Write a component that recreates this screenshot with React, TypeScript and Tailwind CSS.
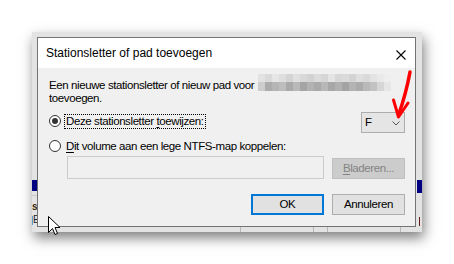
import React from 'react';

const body = "font-['Liberation_Sans',Arial,sans-serif] text-[11.5px] leading-[13px] tracking-[-0.4px] text-black";

// mosaic blur behind the drive name
const topRow = ['#e2e2e2', '#d9d9d9', '#e6e6e6', '#dedede', '#d4d4d4', '#e0e0e0', '#d8d8d8', '#d2d2d2', '#dcdcdc', '#d6d6d6', '#e4e4e4', '#d7d7d7', '#dadada', '#d3d3d3', '#dfdfdf', '#d9d9d9', '#e3e3e3', '#e9e9e9', '#eeeeee'];
const bottomRow = ['#cdcdcd', '#acacac', '#b5b5b5', '#bdbdbd', '#a9a9a9', '#b9b9b9', '#a4a4a4', '#b2b2b2', '#aaaaaa', '#b7b7b7', '#a7a7a7', '#b1b1b1', '#a3a3a3', '#b3b3b3', '#ababab', '#b9b9b9', '#c2c2c2', '#d6d6d6', '#e6e6e6'];

const Radio = ({ checked }: { checked?: boolean }) => (
    <span className="flex h-[12px] w-[12px] shrink-0 items-center justify-center rounded-full border border-[#333333] bg-white">
        {checked && <span className="h-[6px] w-[6px] rounded-full bg-[#333333]" />}
    </span>
);

const Blurred = () => (
    <span className="-mt-[5px] ml-[4px] inline-flex flex-col align-top">
        <span className="flex">
            {topRow.map((c, i) => (
                <span key={i} className="h-[8px] w-[7px]" style={{ backgroundColor: c }} />
            ))}
        </span>
        <span className="flex">
            {bottomRow.map((c, i) => (
                <span key={i} className="h-[9px] w-[7px]" style={{ backgroundColor: c }} />
            ))}
        </span>
    </span>
);

export default function App() {
    return (
        <div className="relative h-[264px] w-[454px] overflow-hidden bg-white">
            <div className="pl-[32px] pt-[32px]">
                {/* window behind the dialog */}
                <div className="relative h-[200px] w-[390px] bg-[#e3e3e3] shadow-[2px_6px_12px_rgba(0,0,0,0.5)]">
                    <div className="absolute left-0 top-[148px] h-[11px] w-[5px] bg-[#000080]" />
                    <div className="absolute right-0 top-[148px] h-[13px] w-[5px] bg-[#000080]" />
                    <div className="absolute left-0 top-[163px] h-px w-[5px] bg-[#c9c9c9]" />
                    <div className="absolute left-0 top-[169px] font-['Liberation_Sans',Arial,sans-serif] text-[10px] font-bold leading-[12px] text-[#3a2a10]">s</div>
                    <div className="absolute left-0 top-[184px] h-[9px] w-px bg-[#5b9bd5]" />
                    <div className="absolute left-[1px] top-[182px] font-['Liberation_Sans',Arial,sans-serif] text-[10px] leading-[12px] text-[#202020]">E</div>
                    <div className="absolute right-[2px] top-[185px] h-[9px] w-px bg-[#6b1a1a]" />
                    <div className="absolute bottom-0 left-[208px] h-[6px] w-px bg-[#b8b8b8]" />
                    <div className="absolute bottom-0 left-[281px] h-[6px] w-px bg-[#b8b8b8]" />
                    <div className="absolute bottom-0 left-[295px] h-[6px] w-px bg-[#b8b8b8]" />
                    <div className="absolute bottom-0 left-[368px] h-[6px] w-px bg-[#b8b8b8]" />

                    {/* dialog */}
                    <div className="absolute left-[5px] top-[5px] flex h-[190px] w-[379px] flex-col border border-[#737373] bg-[#f0f0f0]">
                        <div className="flex h-[30px] items-center justify-between bg-white pl-[8px] pr-[9px]">
                            <span className="font-['Liberation_Sans',Arial,sans-serif] text-[12px] text-black">Stationsletter of pad toevoegen</span>
                            <svg width="10" height="10" viewBox="0 0 10 10" className="mt-[4px]">
                                <path d="M0.5 0.5 L9.5 9.5 M9.5 0.5 L0.5 9.5" stroke="#000" strokeWidth="1.1" />
                            </svg>
                        </div>

                        <div className={`flex flex-col pl-[11px] pr-[10px] pt-[11px] ${body}`}>
                            <p className="whitespace-nowrap">
                                Een nieuwe stationsletter of nieuw pad voor
                                <Blurred />
                                <br />
                                toevoegen.
                            </p>

                            <div className="mt-[7px] flex items-start justify-between">
                                <div className="mt-[2px] flex h-[14px] items-center gap-[3px]">
                                    <Radio checked />
                                    <span className="border border-dotted border-black px-[1px]">
                                        Deze stationsletter <span className="underline underline-offset-2">t</span>oewijzen:
                                    </span>
                                </div>
                                <div className="flex h-[21px] w-[44px] items-center justify-between border border-[#adadad] bg-[#e5e5e5] pl-[3px] pr-[4px]">
                                    <span>F</span>
                                    <svg width="8" height="5" viewBox="0 0 8 5" className="mt-[2px]">
                                        <path d="M0.5 0.5 L4 4 L7.5 0.5" fill="none" stroke="#555" strokeWidth="1" />
                                    </svg>
                                </div>
                            </div>

                            <div className="mt-[6px] flex h-[14px] items-center gap-[4px]">
                                <Radio />
                                <span className="pl-px">
                                    <span className="underline underline-offset-2">D</span>it volume aan een lege NTFS-map koppelen:
                                </span>
                            </div>

                            <div className="ml-[18px] mt-[3px] flex items-start gap-[8px]">
                                <div className="h-[23px] w-[257px] border border-[#cccccc] bg-[#f0f0f0]" />
                                <div className="mt-[2px] flex h-[21px] w-[73px] items-center justify-center border border-[#bfbfbf] bg-[#cccccc] text-[#838383]">
                                    <span>
                                        <span className="underline underline-offset-2">B</span>laderen...
                                    </span>
                                </div>
                            </div>

                            <div className="mt-[15px] flex justify-end gap-[8px]">
                                <button className="flex h-[21px] w-[73px] items-center justify-center border-2 border-[#0078d7] bg-[#e1e1e1]">OK</button>
                                <button className="flex h-[21px] w-[73px] items-center justify-center border border-[#adadad] bg-[#e1e1e1]">Annuleren</button>
                            </div>
                        </div>
                    </div>
                </div>
            </div>

            {/* red annotation arrow */}
            <svg className="absolute left-[386px] top-[66px]" width="30" height="64" viewBox="386 66 30 64">
                <path d="M410 72 Q 406 94 398.5 115" fill="none" stroke="#f00" strokeWidth="3.5" strokeLinecap="round" />
                <path d="M393.5 100 L398.5 117 L408 103" fill="none" stroke="#f00" strokeWidth="3" strokeLinecap="round" strokeLinejoin="round" />
            </svg>

            {/* mouse pointer */}
            <svg className="absolute left-[48px] top-[216px]" width="14" height="21" viewBox="0 0 14 21">
                <path d="M0.5 0.5 L0.5 16.5 L4.5 12.5 L7 18.5 L9.5 17.5 L7 11.5 L12 11.5 Z" fill="#fff" stroke="#000" strokeWidth="1" strokeLinejoin="round" />
            </svg>
        </div>
    );
}
